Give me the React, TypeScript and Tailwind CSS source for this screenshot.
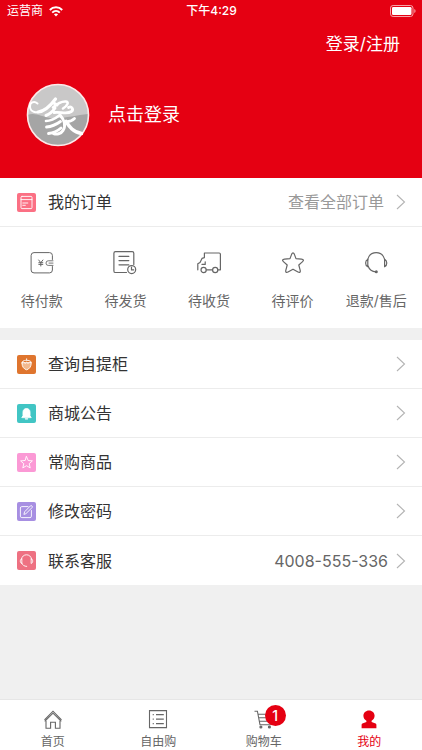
import type { ReactNode } from "react";

type IconProps = { children: ReactNode; className?: string };

function LineIcon({ children, className = "size-6" }: IconProps) {
  return (
    <svg
      viewBox="0 0 24 24"
      className={className}
      fill="none"
      stroke="currentColor"
      strokeWidth="1.2"
      strokeLinecap="round"
      strokeLinejoin="round"
      aria-hidden="true"
    >
      {children}
    </svg>
  );
}

function TileIcon({ children, color }: { children: ReactNode; color: string }) {
  return (
    <svg
      viewBox="0 0 19 19"
      className={`size-[19px] shrink-0 rounded-xs text-white ${color}`}
      fill="none"
      stroke="currentColor"
      strokeWidth="0.9"
      strokeLinecap="round"
      strokeLinejoin="round"
      aria-hidden="true"
    >
      {children}
    </svg>
  );
}

function Chevron() {
  return (
    <svg viewBox="0 0 10 16" className="h-4 w-[10px] shrink-0" fill="none" stroke="#b4b4b4" strokeWidth="1.1" aria-hidden="true">
      <path d="M1 1 L8.5 8 L1 15" />
    </svg>
  );
}

function StatusBar() {
  return (
    <div className="grid h-[22px] grid-cols-3 items-center pr-1.5 pl-[7px] text-xs leading-4">
      <div className="flex items-center gap-1.5">
        <span>运营商</span>
        <svg viewBox="0 0 14 11" className="h-[11px] w-[14px]" fill="none" stroke="currentColor" strokeWidth="1.9" aria-hidden="true">
          <path d="M0.8 4 C4.2 0.4 9.8 0.4 13.2 4" />
          <path d="M3.2 6.6 C5.4 4.5 8.6 4.5 10.8 6.6" />
          <path d="M7 10.4 L4.9 8.3 C6.1 7.3 7.9 7.3 9.1 8.3Z" fill="currentColor" stroke="none" />
        </svg>
      </div>
      <span className="text-center font-medium">下午4:29</span>
      <svg viewBox="0 0 26 12" className="h-3 w-[26px] justify-self-end" aria-hidden="true">
        <rect x="0.5" y="0.5" width="22.5" height="11" rx="2.6" fill="none" stroke="#f7a3a8" />
        <rect x="2" y="2" width="19.5" height="8" rx="1.2" fill="#fff" />
        <path d="M24.3 4 C26 4.6 26 7.4 24.3 8Z" fill="#f7a3a8" />
      </svg>
    </div>
  );
}

function Avatar() {
  return (
    <svg viewBox="0 0 64 64" className="size-16 shrink-0" aria-hidden="true">
      <circle cx="32" cy="32" r="30.5" fill="#c9c8c8" />
      <path d="M1.5 32 C9 29 16 34 24 35 C38 36 50 32 62 31 C63 49 48 62.5 32 62.5 C14 62.5 1.5 49 1.5 32Z" fill="#a5a5a5" />
      <circle cx="32" cy="32" r="30.5" fill="none" stroke="#fde9e9" strokeWidth="1.6" />
      <g fill="none" stroke="#fff" strokeLinecap="round" strokeLinejoin="round">
        <path d="M11.5 20.5 C8 17.5 3.5 19.5 4 24 C4.6 29.5 11 30.5 16 28" strokeWidth="2" />
        <path d="M12 29 C18 28.5 25 22 29.5 16 M27 19.5 L31 22" strokeWidth="3.2" />
        <path d="M27 24.5 C32 20 36 18 40 18.5 C43.5 19 41 23 37 25.5" strokeWidth="2.6" />
        <path d="M20 32.5 C24 31 27 28 29 25" strokeWidth="3" />
        <path d="M28 29.5 C34 28.5 41 31.5 45.5 28.5 C48 26.5 45.5 22.5 42.5 24.5" strokeWidth="2.8" />
        <path d="M20 38 C26 38 30 35 34 32" strokeWidth="2.6" />
        <path d="M20.5 44 C26 43.5 31 41 34.5 38.5" strokeWidth="2.8" />
        <path d="M22.5 50.5 C27 50 31 48.5 35 45" strokeWidth="2.8" />
        <path d="M34 32 C38.5 37 40 43 37 47.5 C35 51 30.5 51.5 27.5 50.5" strokeWidth="3" />
        <path d="M48.5 35.5 C46 38 43 38.8 40 38.5" strokeWidth="2.8" />
        <path d="M40 38.5 C43 43 46.5 49 55.5 50.5" strokeWidth="3.6" />
      </g>
    </svg>
  );
}

function Headset() {
  return (
    <>
      <path d="M3.6 9 C4.7 4 8 1.6 12.2 1.6 C16.4 1.6 19.6 4 20.8 9 M4.2 15.2 C5.3 18.6 8 20.6 12 20.8" />
      <path d="M3.8 8.2 C0.9 9.5 0.9 14.4 3.8 15.8Z M20.6 8.2 C23.5 9.5 23.5 14.4 20.6 15.8Z" />
      <circle cx="12.3" cy="20.8" r="0.9" fill="currentColor" />
    </>
  );
}

const starPath =
  "M12 1.8 C12.8 1.8 13 2.5 13.4 3.4 L15 7.6 L20.5 8.1 C22.6 8.3 23 9.4 21.6 10.6 L17.8 14 L19.2 19.4 C19.6 21.2 18.6 21.9 17 21 L12 18.2 L7 21 C5.4 21.9 4.4 21.2 4.8 19.4 L6.2 14 L2.4 10.6 C1 9.4 1.4 8.3 3.5 8.1 L9 7.6 L10.6 3.4 C11 2.5 11.2 1.8 12 1.8Z";

const orderStates = [
  {
    label: "待付款",
    icon: (
      <>
        <path d="M22.4 8.5 V4.5 Q22.4 1.6 19.5 1.6 H4 Q1.1 1.6 1.1 4.5 V19 Q1.1 21.9 4 21.9 H19.5 Q22.4 21.9 22.4 19 V15.5" strokeWidth="1" />
        <path d="M23 9.8 H18.2 Q16 9.8 16 12.1 Q16 14.4 18.2 14.4 H23 M19 12.1 H23" strokeWidth="0.9" />
        <path d="M8.7 9 L10.8 11.7 L12.9 9 M10.8 11.7 V15 M8.8 11.7 H12.8 M8.8 13.4 H12.8" strokeWidth="1" />
      </>
    ),
  },
  {
    label: "待发货",
    icon: (
      <>
        <path d="M13.5 21.5 H2.5 Q0.9 21.5 0.9 19.9 V2.2 Q0.9 0.6 2.5 0.6 H19.2 Q20.8 0.6 20.8 2.2 V13.5 M6 5.4 H15.8 M6 9.6 H15.8 M6 13.8 H15.8" />
        <circle cx="18.7" cy="18.6" r="4" />
        <path d="M18.5 16.2 V18.9 H20.7" />
      </>
    ),
  },
  {
    label: "待收货",
    icon: (
      <>
        <path d="M0.8 18.8 V12.8 L3 11.4 L5 7.4 L7.4 6.6 V2 H22.2 Q23.4 2 23.4 3.2 V18.8 H20.8 M15.4 18.8 H9.4 M5 13.4 H8.2 V10.8" />
        <circle cx="6.6" cy="19" r="2.6" />
        <circle cx="18.2" cy="19" r="2.6" />
      </>
    ),
  },
  { label: "待评价", icon: <path d={starPath} /> },
  { label: "退款/售后", icon: <Headset /> },
];

const menu = [
  {
    label: "查询自提柜",
    color: "bg-[#df752e]",
    icon: (
      <>
        <path d="M5 8.2 C4.8 11.5 7 14.2 9.6 14.8 C12.2 14.2 14.4 11.5 14.2 8.2Z" fill="#f2b98f" />
        <path d="M4.8 7.8 C5.4 5.2 7.7 5.5 9.6 5.3 C11.5 5.5 13.8 5.2 14.4 7.8 L12.4 7.2 L11 8.4 L9.6 7.2 L8.2 8.4 L6.8 7.2Z M9.6 5.2 V3.8" />
      </>
    ),
  },
  {
    label: "商城公告",
    color: "bg-[#41c5c4]",
    icon: (
      <>
        <path d="M5 13.3 L6 11.8 V8.2 C6 5.8 7.6 4.5 9.5 4.5 C11.4 4.5 13 5.8 13 8.2 V11.8 L14 13.3Z" fill="currentColor" />
        <path d="M8.4 14.8 H10.6" strokeWidth="1.2" />
      </>
    ),
  },
  {
    label: "常购商品",
    color: "bg-[#fb99d5]",
    icon: <path d="M9.5 3.6 L11.2 7.5 L15.4 7.9 L12.2 10.7 L13.2 14.9 L9.5 12.7 L5.8 14.9 L6.8 10.7 L3.6 7.9 L7.8 7.5Z" />,
  },
  {
    label: "修改密码",
    color: "bg-[#a78fe2]",
    icon: (
      <>
        <path d="M11 4.6 H4.8 Q3.4 4.6 3.4 6 V14.2 Q3.4 15.6 4.8 15.6 H13 Q14.4 15.6 14.4 14.2 V8.5" />
        <path d="M7 12 L7.6 9.8 L13.4 3.9 Q14.2 3.2 15 4 Q15.8 4.8 15 5.6 L9.2 11.4Z" />
      </>
    ),
  },
  {
    label: "联系客服",
    color: "bg-[#ee7182]",
    detail: "4008-555-336",
    icon: (
      <>
        <path d="M4.4 8.2 C5 5.2 7 3.8 9.5 3.8 C12 3.8 14 5.2 14.6 8.2 M4.7 12 C5.6 14.2 7 15.3 9.7 15.4" />
        <path d="M4.5 7.8 C2.8 8.7 2.8 11.5 4.5 12.4Z M14.5 7.8 C16.2 8.7 16.2 11.5 14.5 12.4Z" />
      </>
    ),
  },
];

const tabs = [
  {
    label: "首页",
    icon: (
      <>
        <path d="M1.5 10.8 L10 2.2 L18.5 10.8 M1.7 12.4 L10 4.2 L18.3 12.4" />
        <path d="M3 11.8 V19.3 H7.6 V13.2 H12.4 V19.3 H17 V11.8" />
      </>
    ),
  },
  {
    label: "自由购",
    icon: <path d="M1.5 1.6 H18.5 V18.6 H1.5Z M4.7 5.6 H5.8 M8 5.6 H15.8 M4.7 10.1 H5.8 M8 10.1 H15.8 M4.7 14.6 H5.8 M8 14.6 H15.8" />,
  },
  {
    label: "购物车",
    badge: 1,
    icon: (
      <>
        <path d="M0.5 2.2 H3.4 L6 15.8 H17 M4 5.2 H18 L16.4 12.2 H5.3 M4.7 8.7 H17.2" />
        <circle cx="6.9" cy="18" r="1" fill="currentColor" />
        <circle cx="15.4" cy="18" r="1" fill="currentColor" />
      </>
    ),
  },
  {
    label: "我的",
    active: true,
    icon: (
      <path
        d="M10 1.4 C13.2 1.4 15.6 3.8 15.6 6.8 C15.6 9 14.4 10.8 12.6 11.8 V13 L16.6 14.6 Q17.4 15 17.4 16 V19.2 H2.6 V16 Q2.6 15 3.4 14.6 L7.4 13 V11.8 C5.6 10.8 4.4 9 4.4 6.8 C4.4 3.8 6.8 1.4 10 1.4Z"
        fill="currentColor"
        stroke="none"
      />
    ),
  },
];

export default function App() {
  return (
    <div className="flex min-h-screen flex-col bg-[#f0f0f0] font-[Inter,'Noto_Sans_CJK_SC',sans-serif] text-[#333]">
      <header className="bg-[#e50012] pb-[31px] text-white">
        <StatusBar />
        <div className="flex h-[43px] items-center justify-end px-[22px]">
          <button type="button" className="text-[17px] leading-6">登录/注册</button>
        </div>
        <button type="button" className="mt-[18px] ml-[26px] flex items-center gap-[18px] text-lg leading-6">
          <Avatar />
          <span>点击登录</span>
        </button>
      </header>

      <main className="flex-1">
        <section className="bg-white">
          <a href="#orders" className="flex h-[49px] items-center border-b border-[#ececec] pr-4 pl-[17px]">
            <TileIcon color="bg-[#fb7084]">
              <path d="M5 3.4 H14 Q15 3.4 15 4.4 V14.6 Q15 15.6 14 15.6 H5 Q4 15.6 4 14.6 V4.4 Q4 3.4 5 3.4Z M4 6.6 H15 M5.8 10 H10.8 M5.8 12.3 H8.3" />
            </TileIcon>
            <h2 className="ml-3 text-base leading-6">我的订单</h2>
            <span className="mr-3 ml-auto text-base leading-6 text-[#999]">查看全部订单</span>
            <Chevron />
          </a>
          <div className="grid grid-cols-5 pt-6 pr-1 pb-4 text-[#666]">
            {orderStates.map((s) => (
              <button key={s.label} type="button" className="flex flex-col items-center gap-[15px] text-sm leading-[22px]">
                <LineIcon>{s.icon}</LineIcon>
                <span className="whitespace-nowrap">{s.label}</span>
              </button>
            ))}
          </div>
        </section>

        <nav className="mt-3 divide-y divide-[#ececec] bg-white">
          {menu.map((m) => (
            <a key={m.label} href="#menu" className="flex h-[49px] items-center pr-4 pl-[17px]">
              <TileIcon color={m.color}>{m.icon}</TileIcon>
              <span className="ml-3 text-base leading-6">{m.label}</span>
              <span className="mr-2 ml-auto text-base leading-6 text-[#666]">{m.detail}</span>
              <Chevron />
            </a>
          ))}
        </nav>
      </main>

      <nav className="grid grid-cols-4 border-t border-[#e6e6e6] bg-white pt-[9px]">
        {tabs.map((t) => (
          <a
            key={t.label}
            href="#tab"
            className={`flex flex-col items-center gap-[5px] text-xs leading-4 ${t.active ? "text-[#e50012]" : "text-[#666]"}`}
          >
            <span className="relative">
              <svg viewBox="0 0 20 20" className="size-5" fill="none" stroke="currentColor" strokeWidth="1.1" aria-hidden="true">
                {t.icon}
              </svg>
              {t.badge && (
                <span className="absolute -top-1 left-[11px] flex size-[21px] items-center justify-center rounded-full bg-[#e50012] text-sm font-medium text-white">
                  {t.badge}
                </span>
              )}
            </span>
            <span>{t.label}</span>
          </a>
        ))}
      </nav>
    </div>
  );
}
